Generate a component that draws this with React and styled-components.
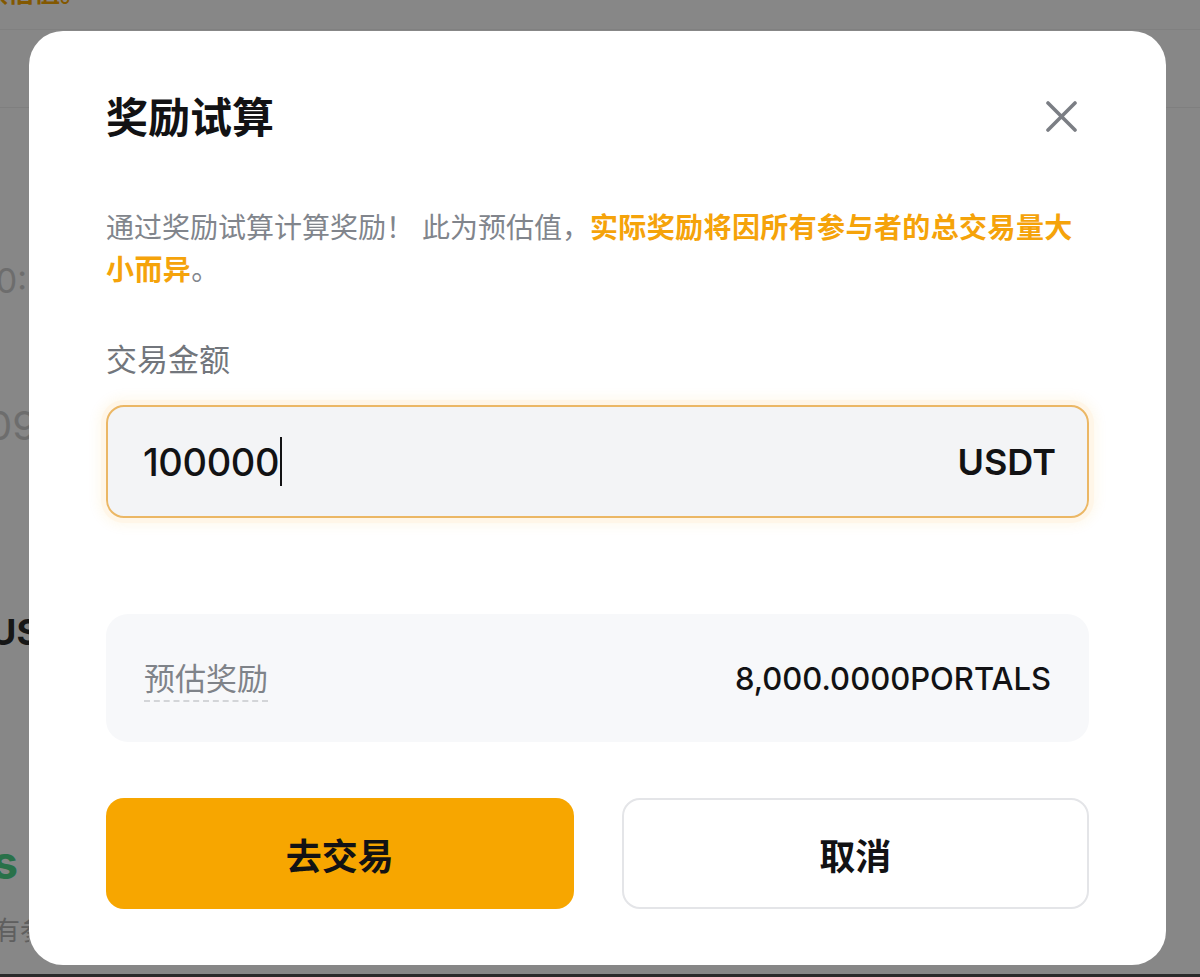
import React from "react";
import styled, { createGlobalStyle } from "styled-components";

const Global = createGlobalStyle`
  html, body { margin: 0; padding: 0; }
  body {
    font-family: Inter, "Noto Sans CJK SC", sans-serif;
    background: #ffffff;
    -webkit-font-smoothing: antialiased;
  }
  * { box-sizing: border-box; }
`;

const Page = styled.div`
  position: relative;
  width: 1200px;
  height: 977px;
  overflow: hidden;
  background: #ffffff;
  font-family: Inter, "Noto Sans CJK SC", sans-serif;
`;

const TopBand = styled.div`
  height: 30px;
  border-bottom: 1px solid #f2f2f2;
  display: flex;
`;

const HeaderBand = styled.div`
  height: 78px;
  border-bottom: 1px solid #f0f0f0;
`;

const Clip = styled.div`
  width: ${(p) => p.$w || 29}px;
  overflow: hidden;
  display: flex;
  justify-content: flex-end;
  white-space: nowrap;
  margin-top: ${(p) => p.$mt || 0}px;
`;

const BgText = styled.span`
  font-size: ${(p) => p.$size}px;
  line-height: ${(p) => p.$lh}px;
  font-weight: ${(p) => p.$weight || 400};
  color: ${(p) => p.$color};
  margin-right: ${(p) => p.$mr || 0}px;
  font-family: Inter, "Noto Sans CJK SC", sans-serif;
`;

const Overlay = styled.div`
  position: absolute;
  inset: 0;
  background: rgba(0, 0, 0, 0.47);
  border-bottom: 3px solid #2a2a2a;
  display: flex;
  align-items: flex-start;
  padding: 31px 0 0 29px;
`;

const Modal = styled.div`
  width: 1137px;
  height: 934px;
  background: #ffffff;
  border-radius: 34px;
  padding: 62px 77px 56px;
  display: flex;
  flex-direction: column;
`;

const Header = styled.div`
  display: flex;
  align-items: center;
  justify-content: space-between;
  height: 50px;
`;

const Title = styled.h2`
  margin: 0;
  font-size: 42px;
  line-height: 50px;
  font-weight: 700;
  color: #121214;
`;

const CloseBtn = styled.button`
  border: none;
  background: transparent;
  padding: 0;
  margin-right: 12px;
  margin-top: -4px;
  width: 31px;
  height: 31px;
  display: flex;
  align-items: center;
  justify-content: center;
  cursor: pointer;
`;

const Desc = styled.p`
  margin: 64px 0 0;
  font-size: 28px;
  line-height: 42px;
  color: #81858c;
  font-weight: 400;
`;

const Highlight = styled.span`
  color: #f5a30a;
  font-weight: 700;
  letter-spacing: 0.4px;
`;

const Label = styled.div`
  margin-top: 47px;
  font-size: 31px;
  line-height: 44px;
  color: #72767c;
`;

const InputBox = styled.div`
  margin-top: 23px;
  height: 113px;
  border: 2px solid #ebb765;
  border-radius: 18px;
  background: #f3f4f6;
  box-shadow: 0 0 0 5px #fff6e8, 0 0 12px 8px rgba(247, 166, 0, 0.07);
  display: flex;
  align-items: center;
  justify-content: space-between;
  padding: 0 31px 0 35px;
`;

const ValueWrap = styled.div`
  display: flex;
  align-items: center;
`;

const InputValue = styled.span`
  font-size: 38px;
  font-weight: 500;
  color: #121214;
  letter-spacing: -0.4px;
`;

const Caret = styled.span`
  width: 2px;
  height: 49px;
  background: #121214;
  margin-left: 1px;
`;

const Unit = styled.span`
  font-size: 36px;
  font-weight: 600;
  color: #121214;
`;

const ResultBox = styled.div`
  margin-top: 96px;
  height: 128px;
  background: #f7f8fa;
  border-radius: 22px;
  display: flex;
  align-items: center;
  justify-content: space-between;
  padding: 0 38px;
`;

const ResultLabel = styled.span`
  font-size: 31px;
  line-height: 40px;
  color: #7f8389;
  border-bottom: 2px dashed #d3d5d8;
  padding-bottom: 1px;
  margin-top: 4px;
`;

const ResultValue = styled.span`
  font-size: 31px;
  font-weight: 500;
  color: #121214;
`;

const Actions = styled.div`
  margin-top: 56px;
  display: grid;
  grid-template-columns: 1fr 1fr;
  gap: 48px;
`;

const Button = styled.button`
  height: 111px;
  border-radius: 18px;
  font-family: Inter, "Noto Sans CJK SC", sans-serif;
  font-size: 36px;
  font-weight: 700;
  color: #121214;
  cursor: pointer;
  background: ${(p) => (p.$primary ? "#f7a600" : "#ffffff")};
  border: ${(p) => (p.$primary ? "none" : "2px solid #e4e5e8")};
`;

const CloseIcon = () => (
  <svg width="31" height="31" viewBox="0 0 31 31" fill="none">
    <path d="M2 2L29 29M29 2L2 29" stroke="#7b7e84" strokeWidth="3.6" strokeLinecap="round" />
  </svg>
);

export default function App() {
  return (
    <Page>
      <Global />
      <TopBand>
        <Clip $w={86} $mt={-22}>
          <BgText $size={26} $lh={30} $color="#f7a600" $weight={600}>
            实际奖励以最终结果为准，此为预估值。
          </BgText>
        </Clip>
      </TopBand>
      <HeaderBand />
      <Clip $mt={153}>
        <BgText $size={34} $lh={40} $color="#cfcfcf" $mr={2}>
          00:00:
        </BgText>
      </Clip>
      <Clip $mt={101}>
        <BgText $size={40} $lh={48} $color="#cfcfcf" $mr={-8}>
          2024-01-09
        </BgText>
      </Clip>
      <Clip $mt={160}>
        <BgText $size={36} $lh={44} $color="#2c2c2c" $weight={700} $mr={-11}>
          1,000 US
        </BgText>
      </Clip>
      <Clip $mt={181}>
        <BgText $size={46} $lh={54} $color="#4fd68b" $weight={700} $mr={11}>
          Rewards
        </BgText>
      </Clip>
      <Clip $mt={26}>
        <BgText $size={26} $lh={32} $color="#b3b3b3" $mr={-17}>
          所有参
        </BgText>
      </Clip>

      <Overlay>
        <Modal>
          <Header>
            <Title>奖励试算</Title>
            <CloseBtn aria-label="关闭">
              <CloseIcon />
            </CloseBtn>
          </Header>
          <Desc>
            通过奖励试算计算奖励！ 此为预估值，
            <Highlight>实际奖励将因所有参与者的总交易量大小而异</Highlight>。
          </Desc>
          <Label>交易金额</Label>
          <InputBox>
            <ValueWrap>
              <InputValue>100000</InputValue>
              <Caret />
            </ValueWrap>
            <Unit>USDT</Unit>
          </InputBox>
          <ResultBox>
            <ResultLabel>预估奖励</ResultLabel>
            <ResultValue>8,000.0000PORTALS</ResultValue>
          </ResultBox>
          <Actions>
            <Button $primary>去交易</Button>
            <Button>取消</Button>
          </Actions>
        </Modal>
      </Overlay>
    </Page>
  );
}
